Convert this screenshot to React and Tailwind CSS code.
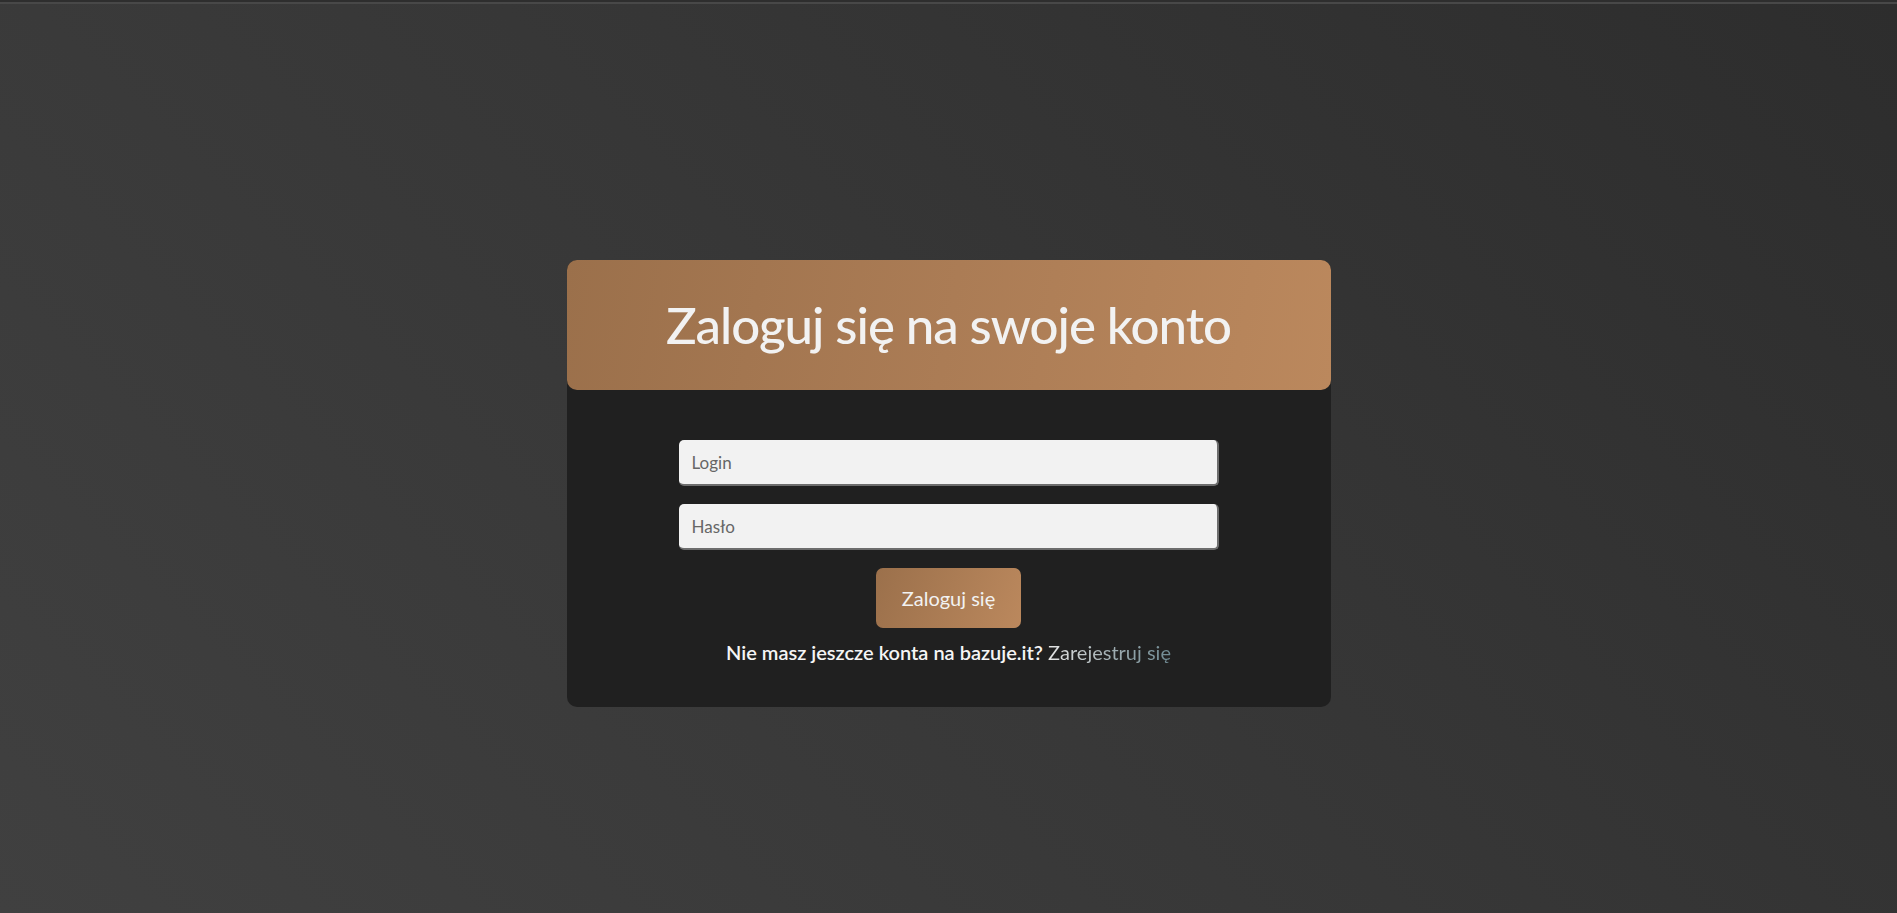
export default function App() {
  return (
    <div
      className="min-h-screen w-full bg-[linear-gradient(45deg,#404040_0%,#373737_50%,#2d2d2d_100%)] flex flex-col"
      style={{ fontFamily: "Lato, 'Noto Sans', sans-serif" }}
    >
      <div className="h-[2px] bg-[#2e2e2e]" />
      <div className="h-[2px] bg-[#484848]" />
      <div className="flex justify-center pt-[256px]">
        <div className="w-[764px] rounded-[10px] bg-[#202020] flex flex-col">
          <div className="h-[130px] rounded-[10px] bg-[linear-gradient(100deg,#9b704b_0%,#ab7c55_50%,#bb885d_100%)] flex items-center justify-center">
            <h1 className="text-[51px] font-medium text-[#f2f2f2] tracking-[-0.02em]">
              Zaloguj się na swoje konto
            </h1>
          </div>
          <div className="flex flex-col items-center pt-[50px] pb-[40px]">
            <input
              type="text"
              placeholder="Login"
              className="w-[540px] h-[46px] rounded-[5px] bg-[#f2f2f2] border-r-2 border-b-2 border-[#6d6d6d] px-[13px] text-[17px] text-[#333] placeholder:text-[#666] outline-none"
            />
            <input
              type="password"
              placeholder="Hasło"
              className="mt-[18px] w-[540px] h-[46px] rounded-[5px] bg-[#f2f2f2] border-r-2 border-b-2 border-[#6d6d6d] px-[13px] text-[17px] text-[#333] placeholder:text-[#666] outline-none"
            />
            <button className="mt-[18px] w-[145px] h-[60px] rounded-[7px] bg-[linear-gradient(110deg,#9b704b_0%,#bb885d_100%)] text-[20px] text-[#f2f2f2]">
              Zaloguj się
            </button>
            <p className="mt-[9px] text-[20px] text-[#f5f5f5]">
              <span className="font-semibold">
                Nie masz jeszcze konta na bazuje.it?
              </span>{" "}
              <a
                href="#"
                className="bg-[linear-gradient(90deg,#e6e6e6_0%,#a7b3b6_45%,#6f8a93_100%)] bg-clip-text text-transparent"
              >
                Zarejestruj się
              </a>
            </p>
          </div>
        </div>
      </div>
    </div>
  );
}
